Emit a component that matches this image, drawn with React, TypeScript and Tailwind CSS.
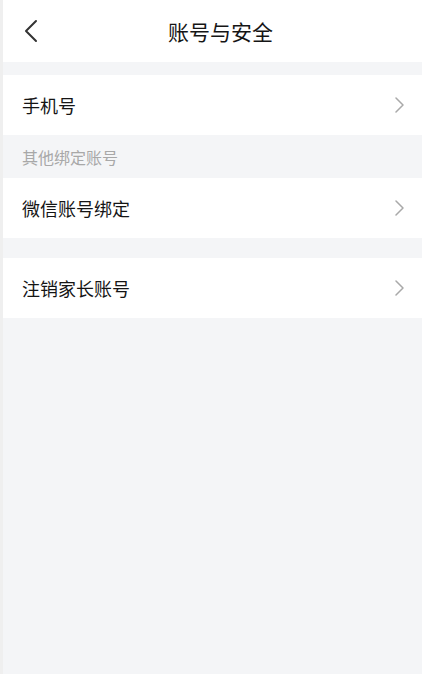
import React from "react";

const Chevron = () => (
  <svg width="9" height="16" viewBox="0 0 9 16" fill="none" className="shrink-0">
    <path d="M1 1l7 7-7 7" stroke="#a9a9a9" strokeWidth="1.5" strokeLinecap="round" strokeLinejoin="round" />
  </svg>
);

const Row = ({ label }: { label: string }) => (
  <div className="flex h-[60px] items-center justify-between bg-white pl-[19px] pr-[18px]">
    <span className="text-[18px] leading-none text-[#151515]">{label}</span>
    <Chevron />
  </div>
);

export default function App() {
  return (
    <div
      className="flex h-[674px] w-[422px] flex-col border-l-[3px] border-[#efefef] bg-[#f4f5f7]"
      style={{ fontFamily: '"Noto Sans CJK SC", "Noto Sans", sans-serif' }}
    >
      <div className="flex h-[62px] items-center bg-white">
        <div className="flex w-[60px] items-center pl-[21px]">
          <svg width="14" height="24" viewBox="0 0 14 24" fill="none">
            <path d="M12 2L2 12l10 10" stroke="#333" strokeWidth="2" strokeLinecap="round" strokeLinejoin="round" />
          </svg>
        </div>
        <div className="flex-1 pr-[44px] text-center text-[21px] leading-none text-[#151515]">账号与安全</div>
      </div>
      <div className="h-[13px]" />
      <Row label="手机号" />
      <div className="flex h-[43px] items-center pl-[19px] text-[16px] leading-none text-[#a8a8a8]">其他绑定账号</div>
      <Row label="微信账号绑定" />
      <div className="h-[20px]" />
      <Row label="注销家长账号" />
    </div>
  );
}
